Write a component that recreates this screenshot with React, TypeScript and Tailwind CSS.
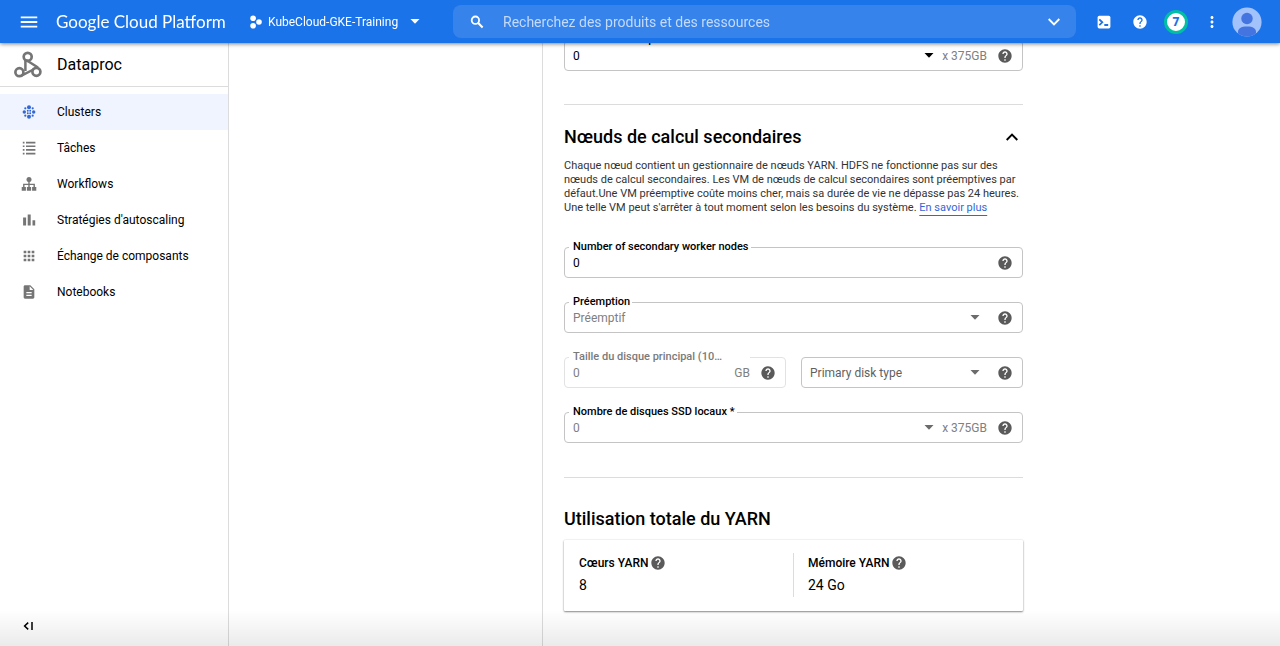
import { useId, type ReactNode } from "react";
import { MdApps, MdDescription, MdHelp, MdMenu, MdMoreVert } from "react-icons/md";

function HelpButton({ label }: { label: string }) {
  return (
    <button type="button" aria-label={label} className="shrink-0 text-[#5a5a5a]">
      <MdHelp className="size-4" />
    </button>
  );
}

function Caret({ className }: { className: string }) {
  return (
    <svg viewBox="0 0 10 5" className={`h-[5px] w-[10px] ${className}`} fill="currentColor" aria-hidden="true">
      <path d="M0.5 0h9L5 4.8z" />
    </svg>
  );
}

interface FieldProps {
  label: string;
  value: string;
  kind?: "input" | "select";
  suffix?: string;
  floating?: boolean;
  muted?: boolean;
  disabled?: boolean;
}

function Field({ label, value, kind = "select", suffix, floating = true, muted = true, disabled = false }: FieldProps) {
  const id = useId();
  const border = disabled ? "border-[#e2e2e2]" : "border-[#c4c4c4]";
  const text = muted ? (floating ? "text-[#808080]" : "text-[#5f5f5f]") : "text-black";
  return (
    <div className={`relative flex h-[31px] min-w-0 flex-1 items-center rounded border ${border} pr-[9px]`}>
      {floating && (
        <label
          htmlFor={id}
          className={`absolute -top-2 left-1 bg-white pl-1 text-[11px] leading-[14px] font-medium whitespace-nowrap ${
            disabled ? "pr-7 text-[#7a7a7a]" : "pr-[2px] text-black"
          }`}
        >
          {label}
        </label>
      )}
      {kind === "input" ? (
        <input
          id={id}
          defaultValue={value}
          disabled={disabled}
          className={`h-full min-w-0 flex-1 bg-transparent pl-2 text-xs outline-none ${text}`}
        />
      ) : (
        <>
          <select
            id={id}
            aria-label={floating ? undefined : label}
            className={`h-full min-w-0 flex-1 appearance-none bg-transparent pl-2 text-xs outline-none ${text}`}
          >
            <option>{value}</option>
          </select>
          <Caret className={`${suffix ? "mr-2" : "mr-[17px]"} ${muted ? "text-[#6b6b6b]" : "text-black"}`} />
        </>
      )}
      {suffix && <span className="mr-[10px] text-xs text-[#808080]">{suffix}</span>}
      <HelpButton label={`Aide : ${label}`} />
    </div>
  );
}

function ClustersIcon() {
  return (
    <svg viewBox="0 0 14 14" className="size-[14px] text-[#3367d6]" fill="currentColor" aria-hidden="true">
      <circle cx="7" cy="2.3" r="2" />
      <circle cx="7" cy="11.7" r="2" />
      <circle cx="2.3" cy="7" r="1.7" />
      <circle cx="11.7" cy="7" r="1.7" />
      <circle cx="3.3" cy="3.3" r="1.1" />
      <circle cx="10.7" cy="3.3" r="1.1" />
      <circle cx="3.3" cy="10.7" r="1.1" />
      <circle cx="10.7" cy="10.7" r="1.1" />
      <circle cx="5.8" cy="5.8" r="0.95" />
      <circle cx="8.2" cy="5.8" r="0.95" />
      <circle cx="5.8" cy="8.2" r="0.95" />
      <circle cx="8.2" cy="8.2" r="0.95" />
    </svg>
  );
}

function JobsIcon() {
  return (
    <svg viewBox="0 0 14 14" className="size-[14px]" fill="currentColor" aria-hidden="true">
      <path d="M0.8 0.7h1.700v1.700H0.800zM4 0.7h9.400v1.700H4zM0.8 4.400h1.700v1.700H0.800zM4 4.400h9.400v1.700H4zM0.800 8.100h1.700v1.700H0.800zM4 8.100h9.400v1.700H4zM0.800 11.800h1.700v1.700H0.800zM4 11.800h9.400v1.700H4z" />
    </svg>
  );
}

function WorkflowsIcon() {
  return (
    <svg viewBox="0 0 16 16" className="size-4" fill="currentColor" aria-hidden="true">
      <circle cx="8" cy="3.4" r="2.5" />
      <path d="M0.7 11h4.200v3.800H0.700zM5.900 11h4.200v3.800H5.900zM11.100 11h4.200v3.800h-4.200z" />
      <path d="M8 5v7M2.8 12V8.400h10.400V12" fill="none" stroke="currentColor" strokeWidth="1.4" />
    </svg>
  );
}

function BarsIcon() {
  return (
    <svg viewBox="0 0 14 14" className="size-[14px]" fill="currentColor" aria-hidden="true">
      <path d="M1.1 4.400h3v8.100h-3zM5.700 1.400h3v11.100h-3zM10.500 7.200h2.700v5.300h-2.700z" />
    </svg>
  );
}

function DataprocLogo() {
  return (
    <svg viewBox="0 0 28 28" className="size-7 text-[#757575]" fill="none" stroke="currentColor" aria-hidden="true">
      <circle cx="13.7" cy="5.8" r="4" strokeWidth="2.7" />
      <circle cx="5.4" cy="21.2" r="4" strokeWidth="2.7" />
      <circle cx="22.4" cy="20.8" r="4" strokeWidth="2.7" />
      <path d="M11.400 8v12M12.500 9.200l11.500 7.300M7 24.800l12.500-6.300" strokeWidth="2.500" />
    </svg>
  );
}

const navItems: { label: string; icon: ReactNode; active?: boolean }[] = [
  { label: "Clusters", icon: <ClustersIcon />, active: true },
  { label: "Tâches", icon: <JobsIcon /> },
  { label: "Workflows", icon: <WorkflowsIcon /> },
  { label: "Stratégies d'autoscaling", icon: <BarsIcon /> },
  { label: "Échange de composants", icon: <MdApps className="size-4" /> },
  { label: "Notebooks", icon: <MdDescription className="size-4" /> },
];

function Header() {
  return (
    <header className="fixed inset-x-0 top-0 z-20 flex h-[43px] items-center bg-[#1a73e8] text-white shadow-[0_1px_4px_rgba(0,0,0,0.5)]">
      <button type="button" aria-label="Menu de navigation" className="ml-[18px]">
        <MdMenu className="size-[22px]" />
      </button>
      <a href="#" className="ml-4 w-[193px] font-['Lato',sans-serif] text-[17px] leading-6 whitespace-nowrap">
        Google Cloud Platform
      </a>
      <button type="button" className="flex w-[204px] items-center text-xs whitespace-nowrap">
        <svg viewBox="0 0 14 14" className="mr-[5px] size-[14px]" fill="currentColor" aria-hidden="true">
          <circle cx="4.1" cy="3.2" r="2.8" />
          <circle cx="4.1" cy="10.8" r="2.8" />
          <circle cx="10" cy="7" r="2.8" />
        </svg>
        KubeCloud-GKE-Training
        <Caret className="ml-3" />
      </button>
      <div className="flex h-[33px] min-w-0 flex-1 items-center rounded-lg bg-[#3683ec] pr-4 pl-[17px]">
        <svg viewBox="0 0 14 14" className="size-[14px] shrink-0" fill="none" stroke="currentColor" aria-hidden="true">
          <circle cx="5.4" cy="5.2" r="3.7" strokeWidth="1.8" />
          <path d="M8 7.8l4.6 4.7" strokeWidth="2.1" />
        </svg>
        <input
          type="search"
          aria-label="Recherche"
          placeholder="Recherchez des produits et des ressources"
          className="ml-[19px] h-full min-w-0 flex-1 bg-transparent text-sm outline-none placeholder:text-[#c4daf9]"
        />
        <button type="button" aria-label="Développer la recherche">
          <svg viewBox="0 0 12 8" className="h-2 w-3" fill="none" stroke="currentColor" strokeWidth="1.9" aria-hidden="true">
            <path d="M0.7 1l5.3 5.3L11.3 1" />
          </svg>
        </button>
      </div>
      <div className="mr-[18px] ml-4 flex items-center">
        <button type="button" aria-label="Cloud Shell" className="flex w-6 justify-center">
          <svg viewBox="0 0 14 14" className="size-[14px]" aria-hidden="true">
            <rect x="0.6" y="0.8" width="12.8" height="12.6" rx="1.6" fill="#fff" />
            <path d="M2.3 4.400l3 2.900-3 2.900M7.300 10h3.900" fill="none" stroke="#1a73e8" strokeWidth="1.8" />
          </svg>
        </button>
        <button type="button" aria-label="Aide" className="ml-3 flex w-6 justify-center">
          <MdHelp className="size-4" />
        </button>
        <button
          type="button"
          aria-label="Notifications"
          className="ml-3 flex size-6 items-center justify-center rounded-full border-3 border-[#00bfa5] bg-white text-xs font-black text-[#1a73e8]"
        >
          7
        </button>
        <button type="button" aria-label="Plus d'options" className="ml-3 flex w-6 justify-center">
          <MdMoreVert className="size-[18px]" />
        </button>
        <button type="button" aria-label="Compte" className="ml-2">
          <svg viewBox="0 0 30 30" className="size-[30px]" aria-hidden="true">
            <clipPath id="avatar-clip">
              <circle cx="15" cy="15" r="14.6" />
            </clipPath>
            <g clipPath="url(#avatar-clip)">
              <rect width="30" height="30" fill="#a1c2fa" />
              <circle cx="15" cy="11.5" r="5.7" fill="#4374e0" />
              <path d="M6 30v-5c0-3.500 3-5.500 9-5.500s9 2 9 5.500v5z" fill="#4374e0" />
            </g>
          </svg>
        </button>
      </div>
    </header>
  );
}

function Sidebar() {
  return (
    <aside className="flex w-[229px] shrink-0 flex-col border-r border-[#dcdcdc] pt-[43px]">
      <div className="flex h-11 items-center border-b border-[#dcdcdc] pl-[14px]">
        <DataprocLogo />
        <h1 className="ml-[15px] text-base">Dataproc</h1>
      </div>
      <nav className="mt-[7px] flex flex-col">
        {navItems.map((item) => (
          <a
            key={item.label}
            href="#"
            aria-current={item.active ? "page" : undefined}
            className={`flex h-9 items-center pl-[21px] text-xs ${item.active ? "bg-[#eff4ff]" : ""}`}
          >
            <span className="mr-5 flex w-4 justify-center text-[#757575]">{item.icon}</span>
            {item.label}
          </a>
        ))}
      </nav>
      <button type="button" aria-label="Réduire le menu" className="mt-auto mb-4 ml-[23px] self-start">
        <svg viewBox="0 0 11 8" className="h-2 w-[11px]" fill="none" stroke="currentColor" strokeWidth="1.5" aria-hidden="true">
          <path d="M5.2 0.6L1.600 4l3.600 3.400M9 0v8" />
        </svg>
      </button>
    </aside>
  );
}

function Metric({ label, value }: { label: string; value: string }) {
  return (
    <div className="flex-1 pl-[14px]">
      <dt className="flex h-5 items-center gap-[2px] text-xs font-medium">
        {label}
        <HelpButton label={`Aide : ${label}`} />
      </dt>
      <dd className="text-sm leading-6">{value}</dd>
    </div>
  );
}

export default function App() {
  return (
    <div className="flex min-h-screen bg-white font-['Roboto',sans-serif] text-black">
      <Header />
      <Sidebar />
      <main className="ml-[313px] flex-1 border-l border-[#dcdcdc] px-[21px] pt-10">
        <div className="flex max-w-[459px] flex-col">
          <div className="flex">
            <Field label="Nombre de disques SSD locaux *" value="0" suffix="x 375GB" muted={false} />
          </div>
          <hr className="mt-[33px] border-[#dcdcdc]" />
          <section className="pt-5">
            <div className="flex items-center justify-between pr-[5px]">
              <h2 className="text-lg leading-6 font-medium">Nœuds de calcul secondaires</h2>
              <button type="button" aria-label="Réduire la section">
                <svg viewBox="0 0 12 8" className="h-2 w-3" fill="none" stroke="currentColor" strokeWidth="1.9" aria-hidden="true">
                  <path d="M0.7 7L6 1.700 11.300 7" />
                </svg>
              </button>
            </div>
            <p className="mt-[10px] text-[11px] leading-[14px] text-[#333]">
              Chaque nœud contient un gestionnaire de nœuds YARN. HDFS ne fonctionne pas sur des nœuds de calcul
              secondaires. Les VM de nœuds de calcul secondaires sont préemptives par défaut.Une VM préemptive coûte
              moins cher, mais sa durée de vie ne dépasse pas 24 heures. Une telle VM peut s'arrêter à tout moment selon
              les besoins du système.{" "}
              <a href="#" className="text-[#3367d6] underline decoration-1 underline-offset-4">
                En savoir plus
              </a>
            </p>
            <div className="mt-8 flex flex-col gap-6">
              <div className="flex">
                <Field label="Number of secondary worker nodes" value="0" kind="input" muted={false} />
              </div>
              <div className="flex">
                <Field label="Préemption" value="Préemptif" />
              </div>
              <div className="flex gap-[15px]">
                <Field label="Taille du disque principal (10…" value="0" kind="input" suffix="GB" disabled />
                <Field label="Primary disk type" value="Primary disk type" floating={false} />
              </div>
              <div className="flex">
                <Field label="Nombre de disques SSD locaux *" value="0" suffix="x 375GB" />
              </div>
            </div>
          </section>
          <hr className="mt-[34px] border-[#dcdcdc]" />
          <section className="pt-[29px]">
            <h2 className="text-lg leading-6 font-medium">Utilisation totale du YARN</h2>
            <dl className="mt-[9px] flex rounded-[1px] px-[1px] pt-[13px] pb-[14px] shadow-[0_1px_2px_rgba(0,0,0,0.45),0_0_2px_rgba(0,0,0,0.12)]">
              <Metric label="Cœurs YARN" value="8" />
              <div className="w-px bg-[#dcdcdc]" />
              <Metric label="Mémoire YARN" value="24 Go" />
            </dl>
          </section>
        </div>
      </main>
      <div className="pointer-events-none fixed inset-x-0 bottom-0 h-9 bg-linear-to-b from-transparent to-black/8" />
    </div>
  );
}
